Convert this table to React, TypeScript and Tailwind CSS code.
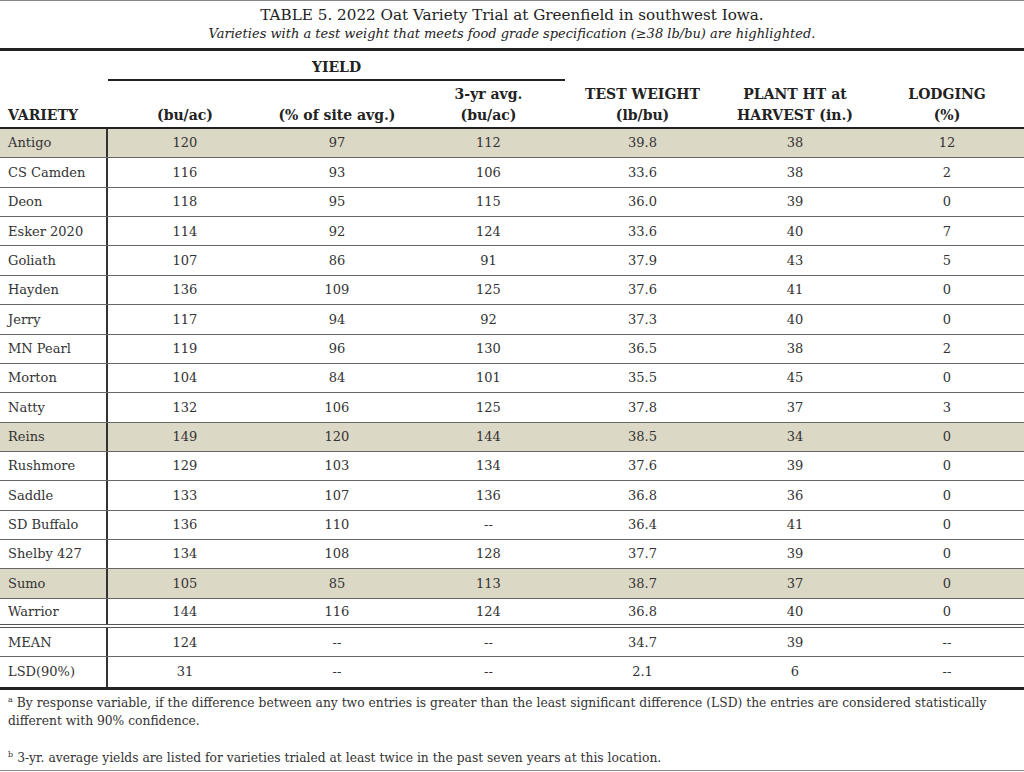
const rows: [string, string, string, string, string, string, string, boolean][] = [
  ["Antigo", "120", "97", "112", "39.8", "38", "12", true],
  ["CS Camden", "116", "93", "106", "33.6", "38", "2", false],
  ["Deon", "118", "95", "115", "36.0", "39", "0", false],
  ["Esker 2020", "114", "92", "124", "33.6", "40", "7", false],
  ["Goliath", "107", "86", "91", "37.9", "43", "5", false],
  ["Hayden", "136", "109", "125", "37.6", "41", "0", false],
  ["Jerry", "117", "94", "92", "37.3", "40", "0", false],
  ["MN Pearl", "119", "96", "130", "36.5", "38", "2", false],
  ["Morton", "104", "84", "101", "35.5", "45", "0", false],
  ["Natty", "132", "106", "125", "37.8", "37", "3", false],
  ["Reins", "149", "120", "144", "38.5", "34", "0", true],
  ["Rushmore", "129", "103", "134", "37.6", "39", "0", false],
  ["Saddle", "133", "107", "136", "36.8", "36", "0", false],
  ["SD Buffalo", "136", "110", "--", "36.4", "41", "0", false],
  ["Shelby 427", "134", "108", "128", "37.7", "39", "0", false],
  ["Sumo", "105", "85", "113", "38.7", "37", "0", true],
  ["Warrior", "144", "116", "124", "36.8", "40", "0", false],
];

const stats: [string, string, string, string, string, string, string][] = [
  ["MEAN", "124", "--", "--", "34.7", "39", "--"],
  ["LSD(90%)", "31", "--", "--", "2.1", "6", "--"],
];

const grid = "grid grid-cols-[108px_154px_150px_153px_155px_150px_154px]";

function DataRow({ cells, shaded, last, double }: { cells: string[]; shaded?: boolean; last?: boolean; double?: boolean }) {
  return (
    <div
      className={`${grid} h-[29.37px] text-[13px] text-[#333] ${shaded ? "bg-[#dcd8c6]" : ""} ${
        last ? "" : double ? "border-b-4 border-double border-[#555]" : "border-b border-[#666]"
      }`}
    >
      <div className="flex items-center border-r-2 border-[#333] pl-2">{cells[0]}</div>
      {cells.slice(1).map((c, i) => (
        <div key={i} className="flex items-center justify-center">
          {c}
        </div>
      ))}
    </div>
  );
}

export default function App() {
  return (
    <div className="w-[1024px] h-[772px] bg-white font-['DejaVu_Serif',serif] text-[#222] border-t border-[#888]">
      {/* Title */}
      <div className="h-[50px] border-b-[3px] border-[#222] flex flex-col items-center pt-[4px]">
        <div className="text-[15.2px] leading-[20px]">TABLE 5. 2022 Oat Variety Trial at Greenfield in southwest Iowa.</div>
        <div className="text-[13px] leading-[18px] italic">
          Varieties with a test weight that meets food grade specification (≥38 lb/bu) are highlighted.
        </div>
      </div>

      {/* Column headings */}
      <div className="border-b-2 border-[#222] font-bold text-[14px]">
        <div className={`${grid} h-[30px]`}>
          <div />
          <div className="col-span-3 flex items-center justify-center border-b-2 border-[#222] pt-[5px]">YIELD</div>
        </div>
        <div className={`${grid} h-[46px] items-end leading-[21px] text-center pb-[1px]`}>
          <div className="text-left pl-2">VARIETY</div>
          <div>(bu/ac)</div>
          <div>(% of site avg.)</div>
          <div>
            3-yr avg.
            <br />
            (bu/ac)
          </div>
          <div>
            TEST WEIGHT
            <br />
            (lb/bu)
          </div>
          <div>
            PLANT HT at
            <br />
            HARVEST (in.)
          </div>
          <div>
            LODGING
            <br />
            (%)
          </div>
        </div>
      </div>

      {/* Body */}
      <div className="border-b-[3px] border-[#222]">
        {rows.map((r, i) => (
          <DataRow key={r[0]} cells={r.slice(0, 7) as string[]} shaded={r[7]} double={i === rows.length - 1} />
        ))}
        {stats.map((r, i) => (
          <DataRow key={r[0]} cells={r} last={i === stats.length - 1} />
        ))}
      </div>

      {/* Footnotes */}
      <div className="h-[81px] border-b border-[#888] px-2 pt-[4px] text-[12.3px] leading-[18px] text-[#333]">
        <p>
          <span className="inline-block align-top text-[8px] leading-[12px] mr-[4px]">a</span>By response variable, if the difference
          between any two entries is greater than the least significant difference (LSD) the entries are considered statistically
          different with 90% confidence.
        </p>
        <p className="mt-[19px]">
          <span className="inline-block align-top text-[8px] leading-[12px] mr-[4px]">b</span>3-yr. average yields are listed for
          varieties trialed at least twice in the past seven years at this location.
        </p>
      </div>
    </div>
  );
}
